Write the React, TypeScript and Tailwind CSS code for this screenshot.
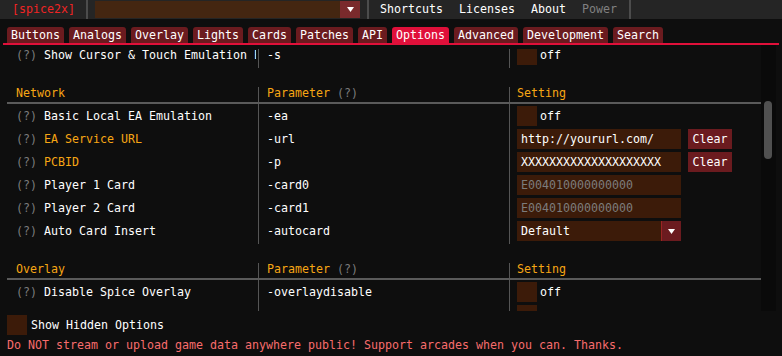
import React from "react";

const Tri = () => (
  <svg width="7" height="5" viewBox="0 0 7 5">
    <polygon points="0,0 7,0 3.5,5" fill="#ffffff" />
  </svg>
);

const Q = () => <span className="text-[#7c7c7c]">(?) </span>;

const Check = ({ label = "off" }: { label?: string }) => (
  <div className="flex items-center h-[20px]">
    <div className="w-[20px] h-[20px] bg-[#3c1b09]" />
    {label && <span className="ml-[3px] whitespace-pre">{label}</span>}
  </div>
);

const Input = ({ value, disabled }: { value: string; disabled?: boolean }) => (
  <div
    className={
      "w-[164px] h-[20px] bg-[#3c1b09] flex items-center pl-[4px] whitespace-pre " +
      (disabled ? "text-[#7c7c7c]" : "text-white")
    }
  >
    {value}
  </div>
);

const ClearBtn = () => (
  <div className="ml-[7px] w-[44px] h-[20px] bg-[#6b1b1f] flex items-center justify-center">Clear</div>
);

type Row = { label: string; orange?: boolean; param: string; setting: React.ReactNode; noq?: boolean };

const Table = ({ title, rows, first }: { title?: string; rows: Row[]; first?: boolean }) => (
  <div className={first ? "" : "mt-[19px]"}>
    {title && (
      <>
        <div className="grid grid-cols-[251px_251px_252px] h-[15px] text-[#f7a614]">
          <div className="pl-[9px]">{title}</div>
          <div className="border-l border-[#555555] pl-[8px]">
            Parameter <span className="text-[#7c7c7c]">(?)</span>
          </div>
          <div className="border-l border-[#555555] pl-[7px]">Setting</div>
        </div>
        <div className="w-[754px] h-[2px] bg-[#5a5a5a]" />
      </>
    )}
    {rows.map((r, i) => (
      <div key={i} className="grid grid-cols-[251px_251px_252px] h-[23px]">
        <div className="pl-[9px] pt-[2px]">
          <div className="w-[240px] h-[20px] overflow-hidden whitespace-pre flex items-center">
            {!r.noq && <Q />}
            <span className={r.orange ? "text-[#f7a614]" : "text-white"}>{r.label}</span>
          </div>
        </div>
        <div className="border-l border-[#555555] pl-[8px] pt-[2px]">
          <div className="h-[20px] flex items-center whitespace-pre">{r.param}</div>
        </div>
        <div className="border-l border-[#555555] pl-[7px] pt-[2px]">{r.setting}</div>
      </div>
    ))}
    <div className="grid grid-cols-[251px_251px_252px] h-[2px]">
      <div />
      <div className="border-l border-[#555555]" />
      <div className="border-l border-[#555555]" />
    </div>
  </div>
);

const tabs = [
  "Buttons",
  "Analogs",
  "Overlay",
  "Lights",
  "Cards",
  "Patches",
  "API",
  "Options",
  "Advanced",
  "Development",
  "Search",
];

export default function App() {
  return (
    <div className="w-[782px] h-[356px] overflow-hidden bg-[#0e0e0e] text-white font-['DejaVu_Sans_Mono',monospace] text-[11.63px] leading-[13px]">
      {/* menu bar */}
      <div className="h-[19px] bg-[#252525] flex items-center">
        <div className="w-[86px] pl-[12px] text-[#f02424] whitespace-pre">[spice2x]</div>
        <div className="w-[2px] h-full bg-[#4c4c4c]" />
        <div className="ml-[7px] w-[265px] h-[17px] bg-[#442611] flex justify-end">
          <div className="w-[20px] h-full bg-[#7a2a2c] flex items-center justify-center">
            <Tri />
          </div>
        </div>
        <div className="ml-[7px] w-[2px] h-full bg-[#4c4c4c]" />
        <div className="ml-[3px] flex whitespace-pre">
          <span className="px-[8px]">Shortcuts</span>
          <span className="px-[8px]">Licenses</span>
          <span className="px-[8px]">About</span>
          <span className="px-[8px] text-[#808080]">Power</span>
        </div>
        <div className="ml-[4px] w-[2px] h-full bg-[#4c4c4c]" />
      </div>

      {/* tabs */}
      <div className="mt-[8px] pl-[7px] flex gap-[5px] h-[16px]">
        {tabs.map((t) => (
          <div
            key={t}
            className={
              "px-[4px] h-[16px] rounded-t-[3px] flex items-center whitespace-pre " +
              (t === "Options" ? "bg-[#e0103a]" : "bg-[#6b1b1f]")
            }
          >
            {t}
          </div>
        ))}
      </div>
      <div className="ml-[3px] w-[776px] h-[2px] bg-[#e0103a]" />

      {/* content */}
      <div className="flex h-[266px]">
        <div className="w-[761px] pl-[7px]">
          <div className="mt-[4px] h-[262px] overflow-hidden">
            <div className="-mt-[6px]">
              <Table
                first
                rows={[
                  {
                    label: "Show Cursor & Touch Emulation Enable",
                    param: "-s",
                    setting: <Check />,
                  },
                ]}
              />
              <Table
                title="Network"
                rows={[
                  { label: "Basic Local EA Emulation", param: "-ea", setting: <Check /> },
                  {
                    label: "EA Service URL",
                    orange: true,
                    param: "-url",
                    setting: (
                      <div className="flex">
                        <Input value="http://yoururl.com/" />
                        <ClearBtn />
                      </div>
                    ),
                  },
                  {
                    label: "PCBID",
                    orange: true,
                    param: "-p",
                    setting: (
                      <div className="flex">
                        <Input value="XXXXXXXXXXXXXXXXXXXX" />
                        <ClearBtn />
                      </div>
                    ),
                  },
                  {
                    label: "Player 1 Card",
                    param: "-card0",
                    setting: <Input value="E004010000000000" disabled />,
                  },
                  {
                    label: "Player 2 Card",
                    param: "-card1",
                    setting: <Input value="E004010000000000" disabled />,
                  },
                  {
                    label: "Auto Card Insert",
                    param: "-autocard",
                    setting: (
                      <div className="w-[164px] h-[20px] bg-[#3c1b09] flex items-center">
                        <span className="pl-[4px] flex-1">Default</span>
                        <div className="w-[20px] h-full bg-[#6b1b1f] border-l border-[#9a2424] flex items-center justify-center">
                          <Tri />
                        </div>
                      </div>
                    ),
                  },
                ]}
              />
              <Table
                title="Overlay"
                rows={[
                  { label: "Disable Spice Overlay", param: "-overlaydisable", setting: <Check /> },
                  { label: "", noq: true, param: "", setting: <Check label="" /> },
                ]}
              />
            </div>
          </div>
        </div>
        <div className="w-[15px] h-full bg-[#0a0a0a] pt-[56px] px-[3px]">
          <div className="w-[8px] h-[58px] rounded-full bg-[#505050]" />
        </div>
      </div>

      {/* footer */}
      <div className="mt-[4px] pl-[7px] flex items-center h-[20px]">
        <div className="w-[20px] h-[20px] bg-[#3c1b09]" />
        <span className="ml-[4px]">Show Hidden Options</span>
      </div>
      <div className="mt-[4px] pl-[7px] text-[#f86c6c] whitespace-pre">
        Do NOT stream or upload game data anywhere public! Support arcades when you can. Thanks.
      </div>
    </div>
  );
}
